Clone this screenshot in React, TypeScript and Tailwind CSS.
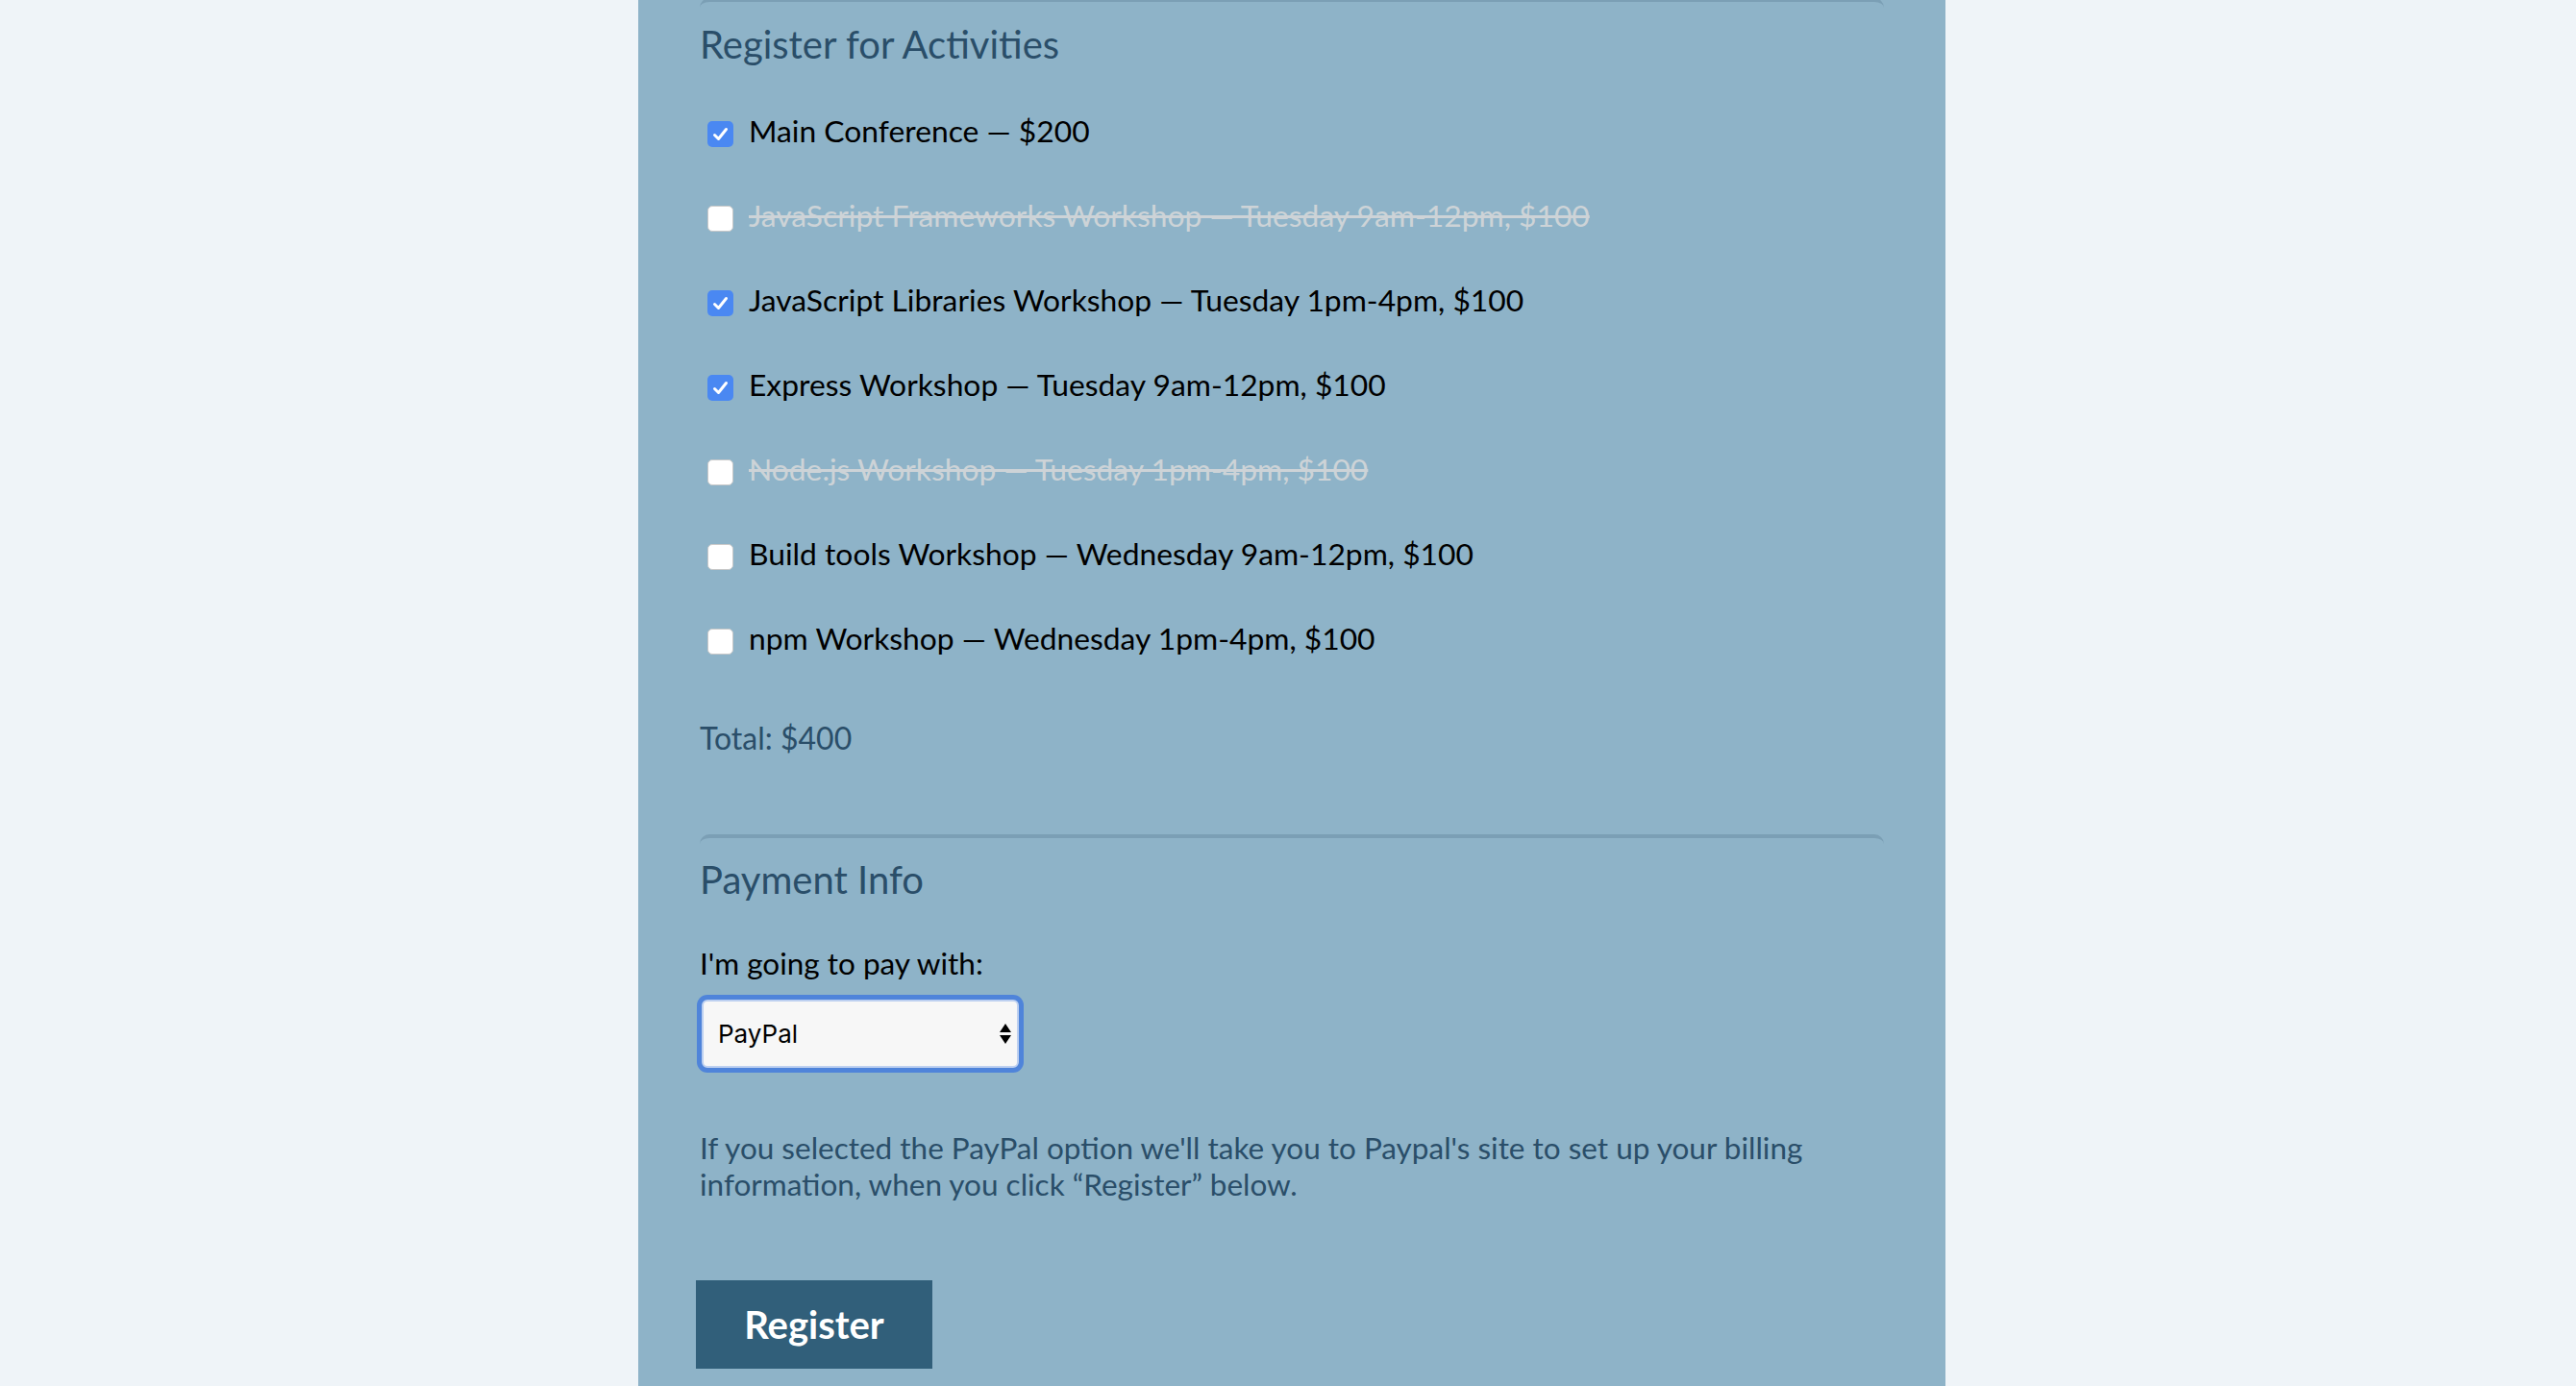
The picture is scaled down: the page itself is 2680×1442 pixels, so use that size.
import { useState } from 'react';

type Activity = { label: string; checked: boolean; disabled: boolean };

const activities: Activity[] = [
    { label: 'Main Conference — $200', checked: true, disabled: false },
    { label: 'JavaScript Frameworks Workshop — Tuesday 9am-12pm, $100', checked: false, disabled: true },
    { label: 'JavaScript Libraries Workshop — Tuesday 1pm-4pm, $100', checked: true, disabled: false },
    { label: 'Express Workshop — Tuesday 9am-12pm, $100', checked: true, disabled: false },
    { label: 'Node.js Workshop — Tuesday 1pm-4pm, $100', checked: false, disabled: true },
    { label: 'Build tools Workshop — Wednesday 9am-12pm, $100', checked: false, disabled: false },
    { label: 'npm Workshop — Wednesday 1pm-4pm, $100', checked: false, disabled: false },
];

function CheckBox({ checked }: { checked: boolean }) {
    if (checked) {
        return (
            <span className="mt-[8px] flex h-[27px] w-[27px] shrink-0 items-center justify-center rounded-[5px] bg-[#4a88f2]">
                <svg width="27" height="27" viewBox="0 0 27 27" fill="none">
                    <path d="M7.5 14.5 L11.5 18.5 L19.5 8.5" stroke="#fff" strokeWidth="3" strokeLinecap="round" strokeLinejoin="round" />
                </svg>
            </span>
        );
    }
    return <span className="mt-[8px] h-[27px] w-[27px] shrink-0 rounded-[5px] border border-[#c9c9c9] bg-white" />;
}

export default function App() {
    const [method, setMethod] = useState('paypal');

    return (
        <div className="flex h-screen justify-center overflow-hidden bg-[#eff4f8] pl-[8px] font-['Lato',sans-serif]">
            <div className="w-[1360px] bg-[#8eb3c8] px-[64px]">
                {/* activities */}
                <fieldset className="-mt-[2px] rounded-t-[10px] border-t-4 border-[#7b9fb5]">
                    <h2 className="mt-[20px] text-[40px] leading-[48px] text-[#2a4e69]">Register for Activities</h2>

                    <div className="mt-[48px] flex flex-col gap-[52px] pl-[8px]">
                        {activities.map((a) => (
                            <label key={a.label} className="flex items-start gap-[16px]">
                                <CheckBox checked={a.checked} />
                                <span
                                    className={
                                        a.disabled
                                            ? 'text-[31.8px] leading-[36px] text-[#cdd3d7] line-through'
                                            : 'text-[31.8px] leading-[36px] text-black'
                                    }
                                >
                                    {a.label}
                                </span>
                            </label>
                        ))}
                    </div>

                    <p className="mt-[66px] text-[32px] leading-[40px] text-[#2a4e69]">Total: $400</p>
                </fieldset>

                {/* payment */}
                <fieldset className="mt-[79.5px] rounded-t-[10px] border-t-4 border-[#7b9fb5]">
                    <h2 className="mt-[19.5px] text-[40px] leading-[48px] text-[#2a4e69]">Payment Info</h2>

                    <label className="mt-[45px] block text-[31.5px] leading-[36px] text-black">I'm going to pay with:</label>

                    <div className="relative mt-[19.5px] ml-[2px] w-[330px]">
                        <select
                            value={method}
                            onChange={(e) => setMethod(e.target.value)}
                            className="h-[71px] w-full appearance-none rounded-[6px] border-2 border-[#bdd0f0] bg-[#f7f7f7] pl-[15px] font-['Inter',sans-serif] text-[26px] text-black shadow-[0_0_0_5px_#4f84da] outline-none"
                        >
                            <option value="credit">Credit Card</option>
                            <option value="paypal">PayPal</option>
                            <option value="bitcoin">Bitcoin</option>
                        </select>
                        <svg className="pointer-events-none absolute right-[8px] top-[25px]" width="12" height="21" viewBox="0 0 12 21">
                            <path d="M6 0 L12 9 L0 9 Z" fill="#000" />
                            <path d="M0 12 L12 12 L6 21 Z" fill="#000" />
                        </svg>
                    </div>

                    <p className="mt-[64px] text-[31.5px] leading-[38px] text-[#2a4e69]">
                        If you selected the PayPal option we'll take you to Paypal's site to set up your billing information, when you click “Register” below.
                    </p>

                    <button className="-ml-[4px] mt-[81px] h-[92px] w-[246px] bg-[#315f7a] text-[40px] font-bold text-white">
                        Register
                    </button>
                </fieldset>
            </div>
        </div>
    );
}
